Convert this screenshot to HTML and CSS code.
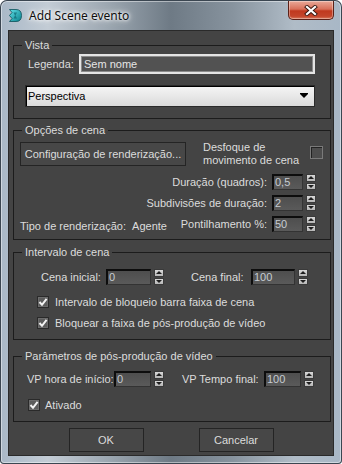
FILE: index.html
```html
<!DOCTYPE html>
<html lang="pt">
<head>
  <meta charset="UTF-8" />
  <title>Add Scene evento</title>
  <link rel="stylesheet" href="styles.css">
</head>
<body>
  <div class="window">
    <div class="titlebar">
      <svg class="app-icon" viewBox="0 0 15 15">
        <defs>
          <linearGradient id="teal" x1="0" y1="0" x2="1" y2="1">
            <stop offset="0" stop-color="#5fe0e8"/>
            <stop offset="1" stop-color="#0a7f8a"/>
          </linearGradient>
        </defs>
        <path d="M1.5 1.5 H8 Q13.5 1.5 13.5 7.5 Q13.5 13.5 8 13.5 H1.5 L4 10.5 L1.5 7.5 L4 4.5 Z" fill="url(#teal)" stroke="#0b4f58" stroke-width="0.8"/>
        <path d="M5.5 4.5 H9 L7.5 7.5 L9 10.5 H5.5 L7 7.5 Z" fill="#0d6470" opacity="0.7"/>
      </svg>
      <span class="title">Add Scene evento</span>
      <div class="close">
        <svg viewBox="0 0 14 11" width="14" height="11">
          <path d="M3 2 L11 9 M11 2 L3 9" stroke="#3a1810" stroke-width="4" stroke-linecap="square"/>
          <path d="M3 2 L11 9 M11 2 L3 9" stroke="#fff" stroke-width="2.2" stroke-linecap="square"/>
        </svg>
      </div>
    </div>

    <div class="client">
      <fieldset class="group vista">
        <legend>Vista</legend>
        <div class="caption-row">
          <span class="caption-label">Legenda:</span>
          <span class="caption-field">Sem nome</span>
        </div>
        <div class="dropdown">
          <span>Perspectiva</span>
          <i class="drop-arrow"></i>
        </div>
      </fieldset>

      <fieldset class="group options">
        <legend>Opções de cena</legend>
        <div class="options-top">
          <span class="btn render-btn">Configuração de renderização...</span>
          <span class="blur-label">Desfoque de<br>movimento de cena</span>
          <span class="check blur-check"></span>
        </div>
        <div class="spin-row first">
          <span class="spin-label">Duração (quadros):</span>
          <span class="num w31">0,5</span>
          <span class="arrows"><i class="up"></i><i class="down"></i></span>
        </div>
        <div class="spin-row">
          <span class="spin-label">Subdivisões de duração:</span>
          <span class="num w31">2</span>
          <span class="arrows"><i class="up"></i><i class="down"></i></span>
        </div>
        <div class="spin-row">
          <span class="render-type">Tipo de renderização:&nbsp;&nbsp;Agente</span>
          <span class="spin-label">Pontilhamento %:</span>
          <span class="num w31">50</span>
          <span class="arrows"><i class="up"></i><i class="down"></i></span>
        </div>
      </fieldset>

      <fieldset class="group range">
        <legend>Intervalo de cena</legend>
        <div class="pair-row">
          <span class="pair-label start-label">Cena inicial:</span>
          <span class="num w45">0</span>
          <span class="arrows"><i class="up"></i><i class="down"></i></span>
          <span class="pair-label end-label">Cena final:</span>
          <span class="num w44">100</span>
          <span class="arrows"><i class="up"></i><i class="down"></i></span>
        </div>
        <div class="check-row range-check first">
          <span class="check on"><svg viewBox="0 0 10 10"><path d="M1.5 5 L4 7.8 L8.6 1.8" /></svg></span>
          <span>Intervalo de bloqueio barra faixa de cena</span>
        </div>
        <div class="check-row range-check">
          <span class="check on"><svg viewBox="0 0 10 10"><path d="M1.5 5 L4 7.8 L8.6 1.8" /></svg></span>
          <span>Bloquear a faixa de pós-produção de vídeo</span>
        </div>
      </fieldset>

      <fieldset class="group post">
        <legend>Parâmetros de pós-produção de vídeo</legend>
        <div class="pair-row">
          <span class="pair-label vp-start">VP hora de início:</span>
          <span class="num w37">0</span>
          <span class="arrows"><i class="up"></i><i class="down"></i></span>
          <span class="pair-label vp-end">VP Tempo final:</span>
          <span class="num w37">100</span>
          <span class="arrows"><i class="up"></i><i class="down"></i></span>
        </div>
        <div class="check-row post-check">
          <span class="check on"><svg viewBox="0 0 10 10"><path d="M1.5 5 L4 7.8 L8.6 1.8" /></svg></span>
          <span>Ativado</span>
        </div>
      </fieldset>

      <div class="buttons">
        <span class="btn dlg-btn">OK</span>
        <span class="btn dlg-btn">Cancelar</span>
      </div>
    </div>
  </div>
</body>
</html>
```

FILE: styles.css
```css
* { box-sizing: border-box; }
body {
  margin: 0;
  background: #fff;
  font-family: "Liberation Sans", Arial, sans-serif;
  font-size: 11px;
}
.window {
  width: 342px;
  height: 464px;
  border-radius: 7px 7px 4px 4px;
  background: linear-gradient(to right, #a9b8c7 0%, #c3ccd5 14%, #9ba6b0 32%, #6e7a85 50%, #87939e 68%, #b0bcc7 86%, #a8b7c6 100%);
  box-shadow: inset 0 0 0 1px #3b4651, inset 0 0 0 2px rgba(255,255,255,.45);
  overflow: hidden;
}

/* title bar */
.titlebar {
  height: 30px;
  display: flex;
  align-items: center;
  padding-left: 8px;
}
.app-icon { width: 15px; height: 15px; }
.title {
  margin-left: 6px;
  font-family: "Noto Sans", sans-serif;
  font-size: 12px;
  color: #101010;
  text-shadow: 0 0 5px #fff, 0 0 3px #fff, 0 0 8px rgba(255,255,255,.8);
}
.close {
  align-self: flex-start;
  margin: 1px 8px 0 auto;
  width: 46px;
  height: 19px;
  border: 1px solid #5b2118;
  border-top: none;
  border-radius: 0 0 5px 5px;
  background: linear-gradient(#e9a998 0%, #d8705a 45%, #c0391f 55%, #c4452b 85%, #d87b5e 100%);
  box-shadow: inset 0 0 0 1px rgba(255,255,255,.35);
  display: flex;
  align-items: center;
  justify-content: center;
}

/* client area */
.client {
  margin: 0 8px;
  height: 426px;
  background: #444;
  border: 1px solid #2a2a2a;
  padding: 7px 0 0 4px;
  color: #dcdcdc;
  white-space: nowrap;
}
.group {
  width: 318px;
  margin: 0;
  padding: 0;
  min-width: 0;
  border: 1px solid #1c1c1c;
}
.group legend {
  margin-left: 8px;
  padding: 0 3px;
  line-height: 14px;
  color: #dcdcdc;
}
.vista { height: 81px; padding-top: 2px; }
.options { height: 117px; margin-top: 4px; }
.range { height: 95px; margin-top: 5px; padding-top: 10px; }
.post { height: 73px; margin-top: 9px; padding-top: 8px; }

/* Vista */
.caption-row { display: flex; align-items: center; height: 20px; }
.caption-label { width: 51px; margin-left: 14px; }
.caption-field {
  width: 236px;
  height: 20px;
  border: 2px solid #e4e4e4;
  box-shadow: inset 0 0 0 1px #8c8c8c;
  background: #525252;
  padding-left: 3px;
  line-height: 16px;
  color: #e6e6e6;
}
.dropdown {
  margin: 11px 0 0 11px;
  width: 290px;
  height: 22px;
  display: flex;
  align-items: center;
  justify-content: space-between;
  padding: 0 6px 0 2px;
  color: #000;
  background: linear-gradient(#f6f6f6, #dadada);
  border: 1px solid #2a2a2a;
  box-shadow: inset 1px 1px 0 #000;
}
.drop-arrow {
  width: 0;
  height: 0;
  border-left: 4px solid transparent;
  border-right: 4px solid transparent;
  border-top: 4px solid #000;
  box-shadow: 0 -1px 0 #000;
}

/* buttons */
.btn {
  display: flex;
  align-items: center;
  justify-content: center;
  height: 24px;
  background: #474747;
  border: 1px solid #242424;
  color: #dcdcdc;
}
.render-btn { width: 166px; margin-left: 6px; }
.buttons {
  display: flex;
  justify-content: center;
  gap: 55px;
  margin-top: 6px;
  padding-right: 4px;
}
.dlg-btn { width: 75px; }

/* Opções de cena */
.options-top { display: flex; margin-top: 5px; }
.blur-label {
  margin: -1px 0 0 17px;
  line-height: 13px;
}
.check {
  width: 12px;
  height: 12px;
  flex: none;
  background: #5c5c5c;
  border: 1px solid #2a2a2a;
  box-shadow: inset 0 0 0 1px #6c6c6c;
}
.check svg { width: 10px; height: 10px; display: block; }
.check svg path { fill: none; stroke: #f2f2f2; stroke-width: 2; }
.blur-check {
  margin: 4px 7px 0 auto;
  width: 13px;
  height: 13px;
  background: #4d4d4d;
  border: 1px solid #7a7a7a;
  box-shadow: inset 1px 1px 0 #222;
}
.spin-row {
  display: flex;
  justify-content: flex-end;
  align-items: center;
  height: 16px;
  margin-top: 5px;
  padding-right: 14px;
}
.spin-row.first { margin-top: 7px; }
.spin-label { margin-right: 5px; }
.render-type {
  margin: 0 auto 0 6px;
  align-self: flex-end;
  line-height: 14px;
  position: relative;
  top: 1px;
}

/* number fields and spinners */
.num {
  height: 16px;
  line-height: 13px;
  padding-left: 1px;
  background: linear-gradient(#4e4e4e, #5a5a5a);
  border: 1px solid #333;
  border-top: 2px solid #0d0d0d;
  border-left: 2px solid #0d0d0d;
  color: #c6ccd2;
}
.w31 { width: 31px; }
.w37 { width: 37px; }
.w44 { width: 44px; }
.w45 { width: 45px; }
.arrows {
  width: 10px;
  height: 16px;
  margin-left: 3px;
  display: flex;
  flex-direction: column;
  gap: 1px;
}
.arrows i {
  flex: 1;
  display: flex;
  align-items: center;
  justify-content: center;
  background: linear-gradient(#d8d8d8, #b6b6b6);
  border: 1px solid #3a3a3a;
}
.arrows .up::after {
  content: "";
  border-left: 3px solid transparent;
  border-right: 3px solid transparent;
  border-bottom: 3px solid #1e1e1e;
}
.arrows .down::after {
  content: "";
  border-left: 3px solid transparent;
  border-right: 3px solid transparent;
  border-top: 3px solid #1e1e1e;
}

/* Intervalo de cena / pós-produção */
.pair-row { display: flex; align-items: center; height: 16px; }
.pair-label { flex: none; }
.start-label { width: 65px; margin-left: 27px; }
.end-label { width: 60px; margin-left: 27px; }
.vp-start { width: 87px; margin-left: 13px; }
.vp-end { width: 82px; margin-left: 18px; }
.check-row {
  display: flex;
  align-items: center;
  gap: 6px;
  height: 12px;
}
.range-check { margin: 9px 0 0 23px; }
.range-check.first { margin-top: 11px; }
.post-check { margin: 12px 0 0 14px; gap: 5px; }
```
